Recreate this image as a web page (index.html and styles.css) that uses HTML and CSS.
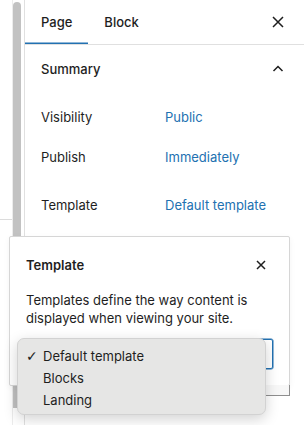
FILE: index.html
```html
<!DOCTYPE html>
<html lang="en">
<head>
  <meta charset="UTF-8" />
  <meta name="viewport" content="width=device-width, initial-scale=1.0" />
  <title>Page settings</title>
  <link rel="stylesheet" href="styles.css">
</head>
<body>
  <div class="editor">
    <div class="canvas"><div class="canvas-line"></div></div>
    <div class="scrollbar"><div class="thumb"></div></div>

    <aside class="sidebar">
      <div class="tabs">
        <button class="tab active">Page</button>
        <button class="tab">Block</button>
        <button class="icon-btn tabs-close" aria-label="Close settings">
          <svg width="24" height="24" viewBox="0 0 24 24"><path d="M7 7l10 10M17 7L7 17" stroke="#1e1e1e" stroke-width="1.5" fill="none"/></svg>
        </button>
      </div>

      <div class="panel">
        <div class="panel-head">
          <span>Summary</span>
          <svg width="24" height="24" viewBox="0 0 24 24"><path d="M7.5 14l4.5-4.5 4.5 4.5" stroke="#1e1e1e" stroke-width="1.5" fill="none"/></svg>
        </div>
        <div class="row">
          <span class="label">Visibility</span>
          <a class="value">Public</a>
        </div>
        <div class="row">
          <span class="label">Publish</span>
          <a class="value">Immediately</a>
        </div>
        <div class="row row-template">
          <span class="label">Template</span>
          <a class="value">Default template</a>
        </div>
      </div>
    </aside>
  </div>

  <!-- template popover -->
  <div class="popover">
    <div class="popover-head">
      <strong>Template</strong>
      <button class="icon-btn" aria-label="Close">
        <svg width="24" height="24" viewBox="0 0 24 24"><path d="M8 8l8 8M16 8l-8 8" stroke="#1e1e1e" stroke-width="1.5" fill="none"/></svg>
      </button>
    </div>
    <p class="popover-text">Templates define the way content is displayed when viewing your site.</p>
    <div class="select" aria-label="Template"></div>
  </div>
  <div class="popover-edge"></div>

  <!-- native select menu, open over the select -->
  <ul class="menu">
    <li class="checked">Default template</li>
    <li>Blocks</li>
    <li>Landing</li>
  </ul>
</body>
</html>
```

FILE: styles.css
```css
body {
  margin: 0;
  font-family: Inter, "Noto Sans", sans-serif;
  font-size: 13px;
  color: #1e1e1e;
  background: #fff;
  height: 425px;
  overflow: hidden;
  position: relative;
}

.editor {
  display: flex;
  height: 425px;
}

.canvas {
  width: 13px;
  padding-top: 219px;
  border-right: 1px solid #ececec;
  box-sizing: border-box;
}

.canvas-line {
  height: 1px;
  background: #dcdcdc;
}

.scrollbar {
  width: 8px;
  padding-top: 2px;
  margin-right: 3px;
}

.thumb {
  height: 406px;
  background: #c2c2c2;
  border-radius: 4px 4px 0 0;
}

.sidebar {
  flex: 1;
  border-left: 1px solid #e0e0e0;
}

button {
  font: inherit;
  color: inherit;
  background: none;
  border: none;
  padding: 0;
  cursor: pointer;
}

.icon-btn {
  width: 24px;
  height: 24px;
  display: flex;
  align-items: center;
  justify-content: center;
}

.tabs {
  display: flex;
  align-items: center;
  height: 44px;
  border-bottom: 1px solid #e0e0e0;
}

.tab {
  height: 44px;
  padding: 0 16px;
  font-weight: 500;
}

.tab.active {
  box-shadow: inset 0 -1.5px #2271b1;
}

.tabs-close {
  margin-left: auto;
  margin-right: 14px;
}

.panel {
  padding: 0 16px;
}

.panel-head {
  display: flex;
  align-items: center;
  justify-content: space-between;
  height: 48px;
  margin-right: -2px;
  font-weight: 500;
}

.row {
  display: flex;
  align-items: center;
  height: 32px;
  margin-top: 8px;
}

.row-template {
  margin-top: 16px;
}

.label {
  width: 124px;
}

.value {
  color: #2271b1;
}

.popover {
  position: absolute;
  left: 9px;
  top: 236px;
  width: 281px;
  box-sizing: border-box;
  padding: 16px;
  background: #fff;
  border: 1px solid #d6d6d6;
  border-radius: 2px;
  box-shadow: 0 2px 6px rgba(0,0,0,0.05);
}

.popover-head {
  display: flex;
  align-items: center;
  justify-content: space-between;
  height: 24px;
}

.popover-head strong {
  font-weight: 600;
}

.popover-text {
  margin: 14px 0 0;
  line-height: 18px;
}

.select {
  margin-top: 12px;
  height: 30px;
  box-sizing: border-box;
  border: 1px solid #2271b1;
  box-shadow: 0 0 0 0.5px #2271b1;
  border-radius: 2px;
}

.popover-edge {
  position: absolute;
  left: 265px;
  top: 385px;
  width: 25px;
  height: 11px;
  box-sizing: border-box;
  border-right: 1px solid #8e8e8e;
  border-bottom: 1px solid #8e8e8e;
  background: #f7f7f7;
}

.menu {
  position: absolute;
  left: 17px;
  top: 338px;
  width: 249px;
  height: 77px;
  box-sizing: border-box;
  margin: 0;
  padding: 6px 0 0;
  list-style: none;
  background: #e6e6e5;
  border: 1px solid #d2d2d2;
  border-radius: 7px;
  box-shadow: 0 4px 14px rgba(0,0,0,0.18);
}

.menu li {
  height: 22px;
  line-height: 22px;
  padding-left: 25px;
  position: relative;
}

.menu li.checked::before {
  content: "✓";
  position: absolute;
  left: 8px;
  font-family: "DejaVu Sans", sans-serif;
  font-size: 14px;
  font-weight: bold;
}
```
